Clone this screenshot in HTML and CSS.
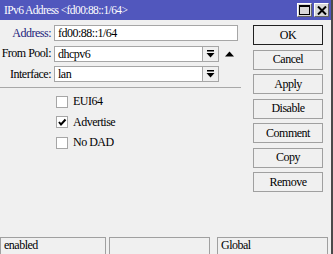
FILE: index.html
```html
<!DOCTYPE html>
<html>
<head>
<meta charset="utf-8">
<link rel="stylesheet" href="styles.css">
</head>
<body>
<div class="window">
  <div class="titlebar">
    <span class="title">IPv6 Address &lt;fd00:88::1/64&gt;</span>
    <div class="tbtns">
      <span class="tbtn"><svg width="11" height="10" viewBox="0 0 11 10"><rect x="0.5" y="0.5" width="10" height="9" fill="none" stroke="#000"/><rect x="0" y="0" width="11" height="2" fill="#000"/></svg></span>
      <span class="tbtn"><svg width="10" height="9" viewBox="0 0 10 9"><path d="M1 0.5 L9 8.5 M9 0.5 L1 8.5" stroke="#000" stroke-width="2"/></svg></span>
    </div>
  </div>
  <div class="main">
    <div class="form">
      <div class="row">
        <label class="lbl lbl-blue">Address:</label>
        <div class="field wide">fd00:88::1/64</div>
      </div>
      <div class="row">
        <label class="lbl">From Pool:</label>
        <div class="field mid">dhcpv6</div>
        <span class="dd"><svg width="9" height="8" viewBox="0 0 9 8"><rect x="1" y="0" width="7" height="1.5" fill="#000"/><path d="M0.5 3 H8.5 L4.5 7.5 Z" fill="#000"/></svg></span>
        <span class="up"><svg width="9" height="6" viewBox="0 0 9 6"><path d="M0 5.5 H9 L4.5 0.5 Z" fill="#000"/></svg></span>
      </div>
      <div class="row">
        <label class="lbl">Interface:</label>
        <div class="field mid">lan</div>
        <span class="dd"><svg width="9" height="8" viewBox="0 0 9 8"><rect x="1" y="0" width="7" height="1.5" fill="#000"/><path d="M0.5 3 H8.5 L4.5 7.5 Z" fill="#000"/></svg></span>
      </div>
      <div class="sep"></div>
      <div class="checks">
        <div class="chk"><span class="box"></span>EUI64</div>
        <div class="chk"><span class="box"><svg width="10" height="10" viewBox="0 0 10 10"><path d="M2 5 L4 7.5 L8.5 2.5" fill="none" stroke="#000" stroke-width="2"/></svg></span>Advertise</div>
        <div class="chk"><span class="box"></span>No DAD</div>
      </div>
    </div>
    <div class="buttons">
      <div class="btn default">OK</div>
      <div class="btn">Cancel</div>
      <div class="btn">Apply</div>
      <div class="btn">Disable</div>
      <div class="btn">Comment</div>
      <div class="btn">Copy</div>
      <div class="btn">Remove</div>
    </div>
  </div>
  <div class="status">
    <div class="sf sf1">enabled</div>
    <div class="sf sf2"></div>
    <div class="sf sf3">Global</div>
  </div>
</div>
</body>
</html>
```
FILE: styles.css
```css
html, body {
  margin: 0;
  padding: 0;
  background: #f0f0f0;
}
body {
  font-family: "Liberation Serif", "DejaVu Serif", serif;
  font-size: 12px;
  letter-spacing: -0.5px;
  color: #000;
}
.window {
  width: 331px;
  height: 254px;
  border-right: 2px solid #4a4a4a;
  display: flex;
  flex-direction: column;
  background: #f0f0f0;
  overflow: hidden;
}
.titlebar {
  height: 20px;
  background: #5157bd;
  display: flex;
  align-items: center;
  padding-left: 4px;
  flex: none;
}
.title {
  color: #fff;
  font-size: 11.5px;
  letter-spacing: -0.6px;
  flex: 1;
}
.tbtns {
  display: flex;
  gap: 2px;
  margin-right: 2px;
}
.tbtn {
  width: 15px;
  height: 14px;
  background: #d8d8d8;
  border: 1px solid #fff;
  border-right-color: #666;
  border-bottom-color: #666;
  box-sizing: border-box;
  display: flex;
  align-items: center;
  justify-content: center;
}
.main {
  flex: 1;
  display: flex;
  padding-top: 5px;
}
.form {
  width: 241px;
  flex: none;
}
.row {
  display: flex;
  align-items: center;
  height: 16px;
  margin-bottom: 4.5px;
}
.lbl {
  width: 54px;
  text-align: right;
  padding-right: 3px;
  box-sizing: border-box;
  flex: none;
}
.lbl-blue {
  color: #22227a;
}
.field {
  height: 16px;
  box-sizing: border-box;
  border: 1px solid #a6a6a6;
  background: #fff;
  padding-left: 3px;
  line-height: 14px;
}
.wide { width: 184px; }
.mid { width: 149px; }
.dd {
  width: 17px;
  height: 16px;
  box-sizing: border-box;
  border: 1px solid #a6a6a6;
  background: #f0f0f0;
  display: flex;
  align-items: center;
  justify-content: center;
  margin-left: -1px;
}
.up {
  margin-left: 6px;
  display: flex;
  align-items: center;
}
.sep {
  height: 1px;
  background: #a8a8a8;
  margin-top: 1.5px;
  width: 241px;
}
.checks {
  padding-left: 56px;
  padding-top: 8px;
}
.chk {
  display: flex;
  align-items: center;
  height: 12px;
  margin-bottom: 8.5px;
}
.box {
  width: 12px;
  height: 12px;
  box-sizing: border-box;
  border: 1px solid #a6a6a6;
  background: #fff;
  margin-right: 5px;
  display: flex;
  align-items: center;
  justify-content: center;
}
.buttons {
  margin-left: 12px;
  display: flex;
  flex-direction: column;
  gap: 4.5px;
}
.btn {
  width: 70px;
  height: 20px;
  box-sizing: border-box;
  border: 1px solid #a0a0a0;
  background: #f0f0f0;
  display: flex;
  align-items: center;
  justify-content: center;
}
.btn.default {
  border-color: #202020;
}
.status {
  flex: none;
  height: 17px;
  display: flex;
}
.sf {
  height: 18px;
  box-sizing: border-box;
  border: 1px solid #a0a0a0;
  padding-left: 3px;
  line-height: 15px;
}
.sf1 { width: 106px; }
.sf2 { width: 101px; margin-left: 3px; }
.sf3 { width: 111px; margin-left: 7px; }
```
